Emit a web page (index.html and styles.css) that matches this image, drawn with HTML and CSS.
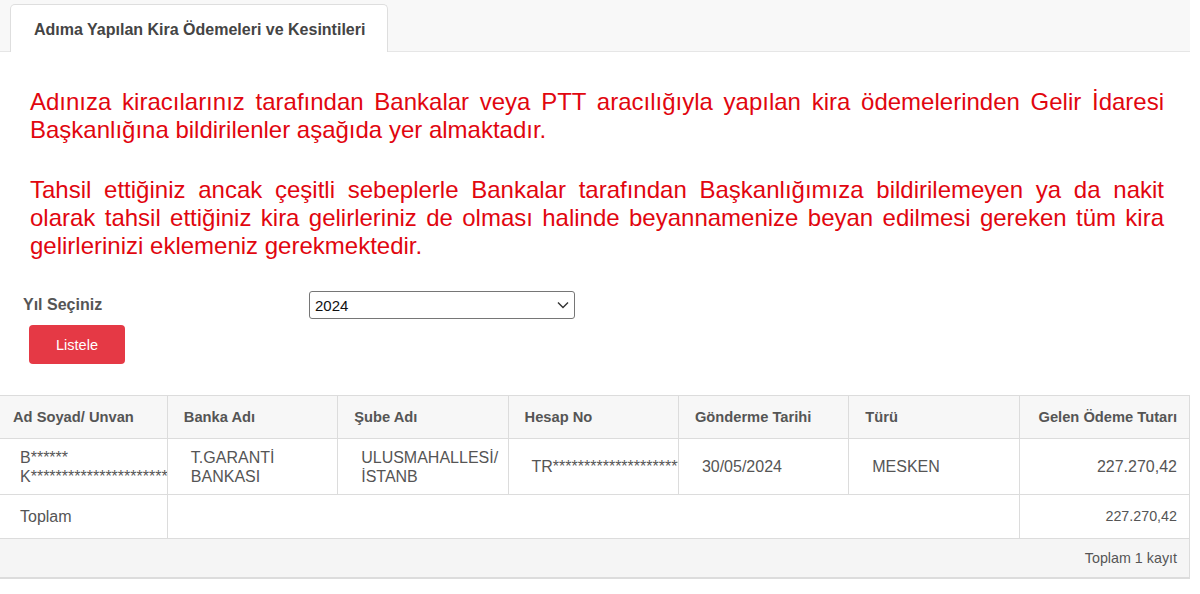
FILE: index.html
```html
<!DOCTYPE html>
<html lang="tr">
<head>
<meta charset="utf-8">
<title>Kira Ödemeleri</title>
<link rel="stylesheet" href="styles.css">
</head>
<body>
<div class="page">
  <div class="tabbar">
    <div class="tab">Adıma Yapılan Kira Ödemeleri ve Kesintileri</div>
  </div>

  <div class="notice">
    <p>Adınıza kiracılarınız tarafından Bankalar veya PTT aracılığıyla yapılan kira ödemelerinden Gelir İdaresi Başkanlığına bildirilenler aşağıda yer almaktadır.</p>
    <p>Tahsil ettiğiniz ancak çeşitli sebeplerle Bankalar tarafından Başkanlığımıza bildirilemeyen ya da nakit olarak tahsil ettiğiniz kira gelirleriniz de olması halinde beyannamenize beyan edilmesi gereken tüm kira gelirlerinizi eklemeniz gerekmektedir.</p>
  </div>

  <div class="form">
    <div class="form-row">
      <label class="label" for="yil">Yıl Seçiniz</label>
      <div class="select-wrap">
        <select id="yil" class="select">
          <option>2024</option>
        </select>
        <svg class="chev" width="12" height="8" viewBox="0 0 12 8"><path d="M1 1.5 L6 6.5 L11 1.5" fill="none" stroke="#333" stroke-width="1.4"/></svg>
      </div>
    </div>
    <button class="btn">Listele</button>
  </div>

  <table class="grid">
    <colgroup>
      <col class="c1"><col><col><col><col><col><col>
    </colgroup>
    <thead>
      <tr>
        <th>Ad Soyad/ Unvan</th>
        <th>Banka Adı</th>
        <th>Şube Adı</th>
        <th>Hesap No</th>
        <th>Gönderme Tarihi</th>
        <th>Türü</th>
        <th class="num">Gelen Ödeme Tutarı</th>
      </tr>
    </thead>
    <tbody>
      <tr class="data">
        <td><div class="clip">B******<br>K*************************</div></td>
        <td><div class="clip">T.GARANTİ BANKASI</div></td>
        <td><div class="clip">ULUSMAHALLESİ/ İSTANB</div></td>
        <td><div class="clip nowrap">TR**********************</div></td>
        <td><div class="clip">30/05/2024</div></td>
        <td><div class="clip">MESKEN</div></td>
        <td class="num">227.270,42</td>
      </tr>
      <tr class="total">
        <td>Toplam</td>
        <td colspan="5"></td>
        <td class="num small">227.270,42</td>
      </tr>
      <tr class="footer">
        <td colspan="7" class="num small">Toplam 1 kayıt</td>
      </tr>
    </tbody>
  </table>
</div>
</body>
</html>
```

FILE: styles.css
```css
html, body {
  margin: 0;
  padding: 0;
  background: #ffffff;
}

body {
  font-family: "Liberation Sans", Arial, Helvetica, sans-serif;
  color: #555555;
}

.page {
  width: 1190px;
  overflow: hidden;
}

.tabbar {
  height: 52px;
  background: #f8f8f8;
  border-bottom: 1px solid #e6e6e6;
  box-sizing: border-box;
  display: flex;
  align-items: flex-end;
  padding-left: 10px;
}

.tab {
  width: 378px;
  height: 48px;
  box-sizing: border-box;
  background: #ffffff;
  border: 1px solid #dedede;
  border-bottom: none;
  border-radius: 5px 5px 0 0;
  margin-bottom: -1px;
  font-size: 16px;
  font-weight: bold;
  color: #444444;
  display: flex;
  align-items: center;
  padding-left: 23px;
  padding-top: 2px;
}

.notice {
  padding: 0 26px 0 30px;
  margin-top: 36px;
}

.notice p {
  margin: 0 0 32px 0;
  color: #e1060f;
  font-size: 24px;
  line-height: 28px;
  text-align: justify;
}

.notice p:last-child {
  margin-bottom: 0;
}

.form {
  margin-top: 31px;
  padding-left: 23px;
}

.form-row {
  display: flex;
  align-items: center;
}

.label {
  width: 286px;
  font-size: 16px;
  font-weight: bold;
  color: #555555;
}

.select-wrap {
  position: relative;
  width: 266px;
  height: 28px;
}

.select {
  appearance: none;
  -webkit-appearance: none;
  width: 100%;
  height: 100%;
  box-sizing: border-box;
  border: 1px solid #767676;
  border-radius: 3px;
  background: #ffffff;
  font-family: "Liberation Sans", Arial, sans-serif;
  font-size: 15px;
  color: #111111;
  padding: 0 0 0 5px;
  margin: 0;
}

.chev {
  position: absolute;
  right: 6px;
  top: 10px;
  pointer-events: none;
}

.btn {
  display: block;
  margin: 6px 0 0 6px;
  width: 96px;
  height: 39px;
  border: none;
  border-radius: 4px;
  background: #e53945;
  color: #ffffff;
  font-family: "Liberation Sans", Arial, sans-serif;
  font-size: 14.5px;
  padding: 0;
}

.grid {
  margin-top: 31px;
  margin-left: -3px;
  width: 1193px;
  border-collapse: collapse;
  table-layout: fixed;
}

.grid th,
.grid td {
  border: 1px solid #dcdcdc;
  vertical-align: middle;
  padding: 0;
}

.grid th {
  height: 42px;
  background: #f7f7f7;
  font-size: 14.7px;
  font-weight: bold;
  text-align: left;
  color: #555555;
  padding-left: 16px;
}

.grid th:first-child {
  border-left: none;
}

.grid td:first-child {
  border-left: none;
}

.grid .num {
  text-align: right;
  padding-right: 12px;
  padding-left: 0;
}

.grid td {
  font-size: 16px;
  line-height: 19px;
  color: #555555;
}

.clip {
  overflow: hidden;
  padding-left: 23px;
}

.nowrap {
  white-space: nowrap;
}

.data td {
  height: 55px;
}

.total td {
  height: 43px;
}

.total td:first-child {
  padding-left: 23px;
}

.footer td {
  height: 38px;
  background: #f5f5f5;
  border-bottom: 2px solid #dcdcdc;
}

.small {
  font-size: 14.3px !important;
}
```
